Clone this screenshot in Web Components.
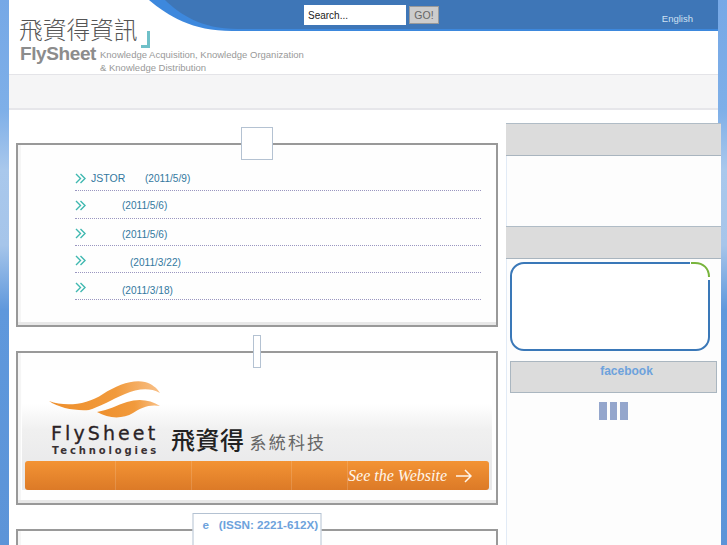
<!DOCTYPE html>
<html lang="zh-Hant">
<head>
<meta charset="utf-8">
<title>FlySheet</title>
<style>
  html, body { margin: 0; height: 545px; overflow: hidden; background: #fff; }
  body { font-family: "Liberation Sans", "Noto Sans CJK TC", sans-serif; }
</style>
</head>
<body>
<fs-page>
  <fs-header slot="header"></fs-header>
  <fs-panel slot="left" tab-width="32">
    <fs-news-row date="(2011/5/9)" title-width="54" drop="0">JSTOR</fs-news-row>
    <fs-news-row date="(2011/5/6)" title-width="31" drop="0"></fs-news-row>
    <fs-news-row date="(2011/5/6)" title-width="31" drop="1"></fs-news-row>
    <fs-news-row date="(2011/3/22)" title-width="39" drop="2"></fs-news-row>
    <fs-news-row date="(2011/3/18)" title-width="31" drop="3"></fs-news-row>
  </fs-panel>
  <fs-panel slot="left" tab-width="8" height="154" flush>
    <fs-banner></fs-banner>
  </fs-panel>
  <fs-panel slot="left" tab-width="129" height="60">
    <span slot="tab">e&nbsp;&nbsp;&nbsp;(ISSN: 2221-612X)</span>
  </fs-panel>
  <fs-sidebar slot="right"></fs-sidebar>
</fs-page>

<script>
const CustomElement = (selector, template, init) => {
  const Template = document.createElement('template');
  Template.innerHTML = template;
  class Element extends HTMLElement {
    connectedCallback() {
      if (!this.shadowRoot) {
        this.attachShadow({ mode: 'open' }).appendChild(document.importNode(Template.content, true));
        if (init) init(this, this.shadowRoot);
      }
    }
  }
  customElements.define(selector, Element);
};

CustomElement('fs-page', `
  <style>
    :host {
      display: block;
      width: 727px;
      height: 545px;
      overflow: hidden;
      background: linear-gradient(#76a8e6 0, #7eafe8 110px, #a9c8ec 170px, #a6c5ea 245px, #5f98dc 310px, #5c94d8 545px);
    }
    .sheet { margin: 0 9px; height: 545px; background: #fff; }
    .nav { height: 33px; background: #f5f5f6; border-top: 1px solid #e4e4e8; border-bottom: 2px solid #e6e6ea; margin-top: -1px; }
    .main { display: grid; grid-template-columns: 482px 212px; column-gap: 8px; padding-left: 7px; }
    .left { padding-top: 17px; display: flex; flex-direction: column; gap: 8px; }
    .right { padding-top: 13px; }
  </style>
  <div class="sheet">
    <slot name="header"></slot>
    <div class="nav"></div>
    <div class="main">
      <div class="left"><slot name="left"></slot></div>
      <div class="right"><slot name="right"></slot></div>
    </div>
  </div>
`);

CustomElement('fs-header', `
  <style>
    :host { display: flex; position: relative; height: 75px; }
    .wave { position: absolute; left: 0; top: 0; }
    .brand { position: relative; width: 295px; box-sizing: border-box; padding: 13px 0 0 10px; }
    .cn-line { display: flex; align-items: flex-start; height: 32px; }
    .cn { font: 300 23.7px/32px "Noto Sans CJK TC", sans-serif; color: #555; }
    .corner { margin: 18px 0 0 4px; display: block; }
    .en-line { display: flex; }
    .fly { flex: none; font: bold 19px/18px "Liberation Sans", sans-serif; color: #8c8c8c; width: 80px; margin-left: 1px; letter-spacing: -.4px; }
    .tag { flex: none; font: 9.5px/13px "Liberation Sans", sans-serif; color: #999; padding-top: 3px; white-space: nowrap; }
    .search { position: relative; display: flex; align-items: flex-start; gap: 3px; padding-top: 5px; }
    .search input {
      box-sizing: border-box; width: 102px; height: 20px; margin: 0; padding: 0 4px; border: 0; background: #fff;
      font: 10px "Liberation Sans", sans-serif; color: #222;
    }
    .search input::placeholder { color: #222; opacity: 1; }
    .search button {
      box-sizing: border-box; width: 30px; height: 18px; margin: 1px 0 0; padding: 0;
      background: #ccc; border: 1px solid #999; color: #666; font: 10.5px "Liberation Sans", sans-serif;
    }
    .lang { position: relative; margin-left: auto; padding: 12px 25px 0 0; font: 9.5px/13px "Liberation Sans", sans-serif; color: #cfe0f2; }
  </style>
  <svg class="wave" width="709" height="32" viewBox="9 0 709 32">
    <path d="M149 0C168 16 192 31 232 31H718V0Z" fill="#3d88dd"/>
    <path d="M165 0C180 14 200 29 238 29H718V0Z" fill="#3e76b7"/>
  </svg>
  <div class="brand">
    <div class="cn-line">
      <span class="cn">飛資得資訊</span>
      <svg class="corner" width="9" height="17" viewBox="0 0 9 17"><path d="M6 0H9V17H0V14H6Z" fill="#6fc0c8"/></svg>
    </div>
    <div class="en-line">
      <span class="fly">FlySheet</span>
      <span class="tag">Knowledge Acquisition, Knowledge Organization<br>&amp; Knowledge Distribution</span>
    </div>
  </div>
  <form class="search">
    <input type="text" placeholder="Search...">
    <button type="button">GO!</button>
  </form>
  <span class="lang">English</span>
`);

CustomElement('fs-panel', `
  <style>
    :host { display: block; position: relative; padding-top: 16px; }
    .box {
      box-sizing: border-box;
      min-height: 184px;
      border: 2px solid #999;
      background: #fefefe;
      box-shadow: inset 0 -3px 0 #e8e8e8, inset 3px 0 0 #f5f5f5;
      padding: 19px 15px 0 57px;
    }
    :host([flush]) .box { padding: 17px 4px 0; }
    .tab {
      position: absolute; top: 0; left: 50%; transform: translateX(-50%);
      box-sizing: border-box; height: 33px; padding: 0;
      background: #fff; border: 1px solid #b4c2d2;
      font: bold 11.7px/22px "Liberation Sans", sans-serif; color: #6da2dc; white-space: nowrap;
    }
    ::slotted([slot=tab]) { padding-left: 9px; }
  </style>
  <div class="tab"><slot name="tab"></slot></div>
  <div class="box"><slot></slot></div>
`, (el, root) => {
  const tabWidth = el.getAttribute('tab-width');
  if (tabWidth) root.querySelector('.tab').style.width = tabWidth + 'px';
  const height = el.getAttribute('height');
  if (height) root.querySelector('.box').style.minHeight = height + 'px';
});

CustomElement('fs-news-row', `
  <style>
    :host {
      display: flex; box-sizing: border-box; height: 27.25px; padding-top: 7px;
      border-bottom: 1px dotted #9a96c0;
      font: 10.5px/14px "Liberation Sans", sans-serif; color: #33789f;
    }
    svg { flex: none; margin: 2px 5px 0 0; }
    .title { display: block; flex: none; }
    .date { font-size: 10.1px; }
  </style>
  <svg width="11" height="11" viewBox="0 0 11 11" fill="none" stroke="#3fb8b0" stroke-width="1.4">
    <path d="M1 1L5.5 5.5L1 10M5.5 1L10 5.5L5.5 10"/>
  </svg>
  <span class="title"><slot></slot></span>
  <span class="date"></span>
`, (el, root) => {
  const date = root.querySelector('.date');
  date.textContent = el.getAttribute('date');
  date.style.paddingTop = (1 + Number(el.getAttribute('drop'))) + 'px';
  root.querySelector('.title').style.width = el.getAttribute('title-width') + 'px';
});

CustomElement('fs-banner', `
  <style>
    :host {
      display: block; box-sizing: border-box; height: 120px; padding: 11px 3px 0;
      background: linear-gradient(#fff 0, #fff 34px, #f0f0f0 60px, #e9e9ea 100px);
    }
    .top { display: flex; height: 80px; }
    .mark { width: 146px; flex: none; padding-left: 24px; box-sizing: border-box; }
    .mark svg { display: block; margin-bottom: 6px; }
    .fly { font: 19px/16px "DejaVu Sans", sans-serif; letter-spacing: 3.1px; color: #2b2326; white-space: nowrap; -webkit-text-stroke: .3px #2b2326; margin-left: 2px; }
    .tech { font: bold 10px/14px "DejaVu Sans", sans-serif; letter-spacing: 2.85px; color: #3a3233; white-space: nowrap; margin: 3px 0 0 3px; }
    .cn { padding-top: 46px; white-space: nowrap; }
    .cn b { font: 500 24px/24px "Noto Sans CJK TC", sans-serif; color: #222; letter-spacing: .5px; }
    .cn span { font: 400 17px/24px "Noto Sans CJK TC", sans-serif; color: #666; letter-spacing: 2.2px; margin-left: 5px; }
    .bar {
      display: flex; justify-content: flex-end; align-items: center; height: 29px; box-sizing: border-box; padding-right: 17px; gap: 9px;
      border-radius: 3px;
      background:
        linear-gradient(rgba(255,255,255,.14), rgba(255,255,255,.14)) 90px 0 / 1px 100% no-repeat,
        linear-gradient(rgba(255,255,255,.14), rgba(255,255,255,.14)) 166px 0 / 1px 100% no-repeat,
        linear-gradient(rgba(255,255,255,.14), rgba(255,255,255,.14)) 266px 0 / 1px 100% no-repeat,
        linear-gradient(rgba(255,255,255,.14), rgba(255,255,255,.14)) 322px 0 / 1px 100% no-repeat,
        linear-gradient(#f39334, #dc7a27);
      font: italic 16px/29px "Liberation Serif", serif; color: #fff6ea;
    }
  </style>
  <div class="top">
    <div class="mark">
      <svg width="112" height="38" viewBox="0 0 112 38">
        <defs>
          <linearGradient id="w" x1="0" x2="1" y1="0" y2="0">
            <stop offset="0" stop-color="#ee8f2c"/><stop offset=".6" stop-color="#f19a3c"/><stop offset="1" stop-color="#f8c088"/>
          </linearGradient>
        </defs>
        <path d="M0 20C16 26 38 24 54 13C68 4 84-2 96 1C103 3 108 7 111 12C100 6 88 8 76 13C62 19 50 26 40 29C26 30 10 27 0 20Z" fill="url(#w)"/>
        <path d="M48 31C60 29 68 24 78 21C90 17 102 19 111 25C100 23 92 27 84 32C74 38 60 38 48 31Z" fill="url(#w)"/>
      </svg>
      <div class="fly">FlySheet</div>
      <div class="tech">Technologies</div>
    </div>
    <div class="cn"><b>飛資得</b><span>系統科技</span></div>
  </div>
  <div class="bar">
    <span>See the Website</span>
    <svg width="16" height="14" viewBox="0 0 16 14" fill="none" stroke="#fff6ea" stroke-width="1.5"><path d="M0 7H15M9 1L15 7L9 13"/></svg>
  </div>
`);

CustomElement('fs-sidebar', `
  <style>
    :host { display: block; width: 214.5px; height: 430px; background: #fdfdfd; box-shadow: inset 1px 0 0 #e2ebf6; }
    .head { box-sizing: border-box; background: #dcdcdc; border-top: 1px solid #b0bcc6; border-bottom: 1px solid #a9b5bf; height: 33px; }
    .gap { height: 70px; }
    .round {
      position: relative; box-sizing: border-box; width: 200px; height: 89px; margin: 3px 0 10px 4px;
      background: #fff; border: 2px solid #3a78b8; border-radius: 14px;
    }
    .round svg { position: absolute; top: -2px; right: -2px; }
    .fb {
      box-sizing: border-box; width: 207px; height: 32px; margin-left: 4px;
      border: 1px solid #aab6c0; background: #dcdcdc; text-align: center; padding: 2px 0 0 26px;
      font: bold 12px/14px "Liberation Sans", sans-serif; color: #6da2dc;
    }
    .bars { display: flex; gap: 3px; padding: 9px 0 0 93px; }
    .bars i { display: block; width: 7.5px; height: 18px; background: #94a6cc; }
  </style>
  <div class="head"></div>
  <div class="gap"></div>
  <div class="head"></div>
  <div class="round">
    <svg width="20" height="18" viewBox="0 0 20 18" fill="none">
      <path d="M0 0H20V18H0Z" fill="#fff"/>
      <path d="M1 1H5C13 1 19 6 19 15" stroke="#78b43c" stroke-width="2"/>
    </svg>
  </div>
  <div class="fb">facebook</div>
  <div class="bars"><i></i><i></i><i></i></div>
`);
</script>
</body>
</html>
